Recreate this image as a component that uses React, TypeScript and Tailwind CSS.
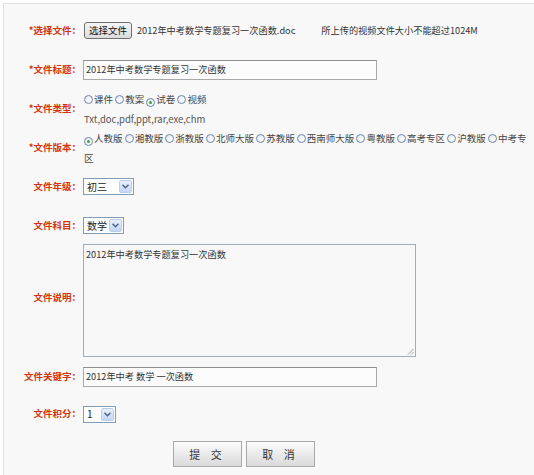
import React from "react";

const font = { fontFamily: '"Noto Sans CJK SC", "Liberation Sans", sans-serif' };

function Label({ text, star }: { text: string; star?: boolean }) {
  return (
    <div className="w-[77px] shrink-0 text-right text-[9.5px] font-bold leading-none text-[#d2340c]">
      {star && "*"}
      {text}：
    </div>
  );
}

function Radio({ checked }: { checked?: boolean }) {
  return (
    <span className="mr-[1px] inline-flex h-[9px] w-[9px] items-center justify-center rounded-full border border-[#6d84a6] bg-gradient-to-br from-[#e3e8ef] to-white align-[-1px]">
      {checked && <span className="h-[3px] w-[3px] rounded-full bg-[#35a635]" />}
    </span>
  );
}

function Choice({ label, checked }: { label: string; checked?: boolean }) {
  return (
    <>
      <Radio checked={checked} />
      {label}{" "}
    </>
  );
}

function Select({ value, className }: { value: string; className: string }) {
  return (
    <div className={"flex h-[17px] items-center border border-[#7f9db9] bg-white " + className}>
      <span className="flex-1 pl-[3px] text-[10px] leading-none text-[#222]">{value}</span>
      <span className="mr-[1px] flex h-[13px] w-[13px] items-center justify-center rounded-[2px] border border-[#bccde9] bg-gradient-to-b from-[#e9f0fd] to-[#c3d5f6]">
        <svg width="7" height="5" viewBox="0 0 7 5">
          <path d="M0.5 0.8 L3.5 3.8 L6.5 0.8" fill="none" stroke="#4d6185" strokeWidth="1.4" />
        </svg>
      </span>
    </div>
  );
}

function TextBox({ value }: { value: string }) {
  return (
    <div className="flex h-[20px] w-[294px] items-center border border-[#a8a8a8] border-t-[#8e8e8e] bg-[#fcfcfc] pl-[2px] text-[9.2px] text-[#333]">
      {value}
    </div>
  );
}

export default function App() {
  return (
    <div className="h-[475px] w-[534px] bg-white text-[9.2px] text-[#444]" style={font}>
      <div className="ml-[3px] mt-[3px] h-[472px] border-l border-t border-[#e2e2e2] bg-[#f8f8f8] pt-[7px]">
        <div className="flex h-[39px] items-center">
          <Label text="选择文件" star />
          <div className="ml-[3px] flex items-center">
            <span className="flex h-[17px] w-[48px] items-center justify-center rounded-[3px] border border-[#707070] bg-gradient-to-b from-[#f6f6f6] to-[#dcdcdc] text-[9.5px] text-[#111]">
              选择文件
            </span>
            <span className="ml-[5px] text-[#333]">2012年中考数学专题复习一次函数.doc</span>
            <span className="ml-[26px] text-[#333]">所上传的视频文件大小不能超过1024M</span>
          </div>
        </div>

        <div className="flex h-[39px] items-center">
          <Label text="文件标题" star />
          <div className="ml-[2px]">
            <TextBox value="2012年中考数学专题复习一次函数" />
          </div>
        </div>

        <div className="flex h-[39px] items-center">
          <Label text="文件类型" star />
          <div className="ml-[3px] text-[9.5px] leading-[20px]">
            <div>
              <Choice label="课件" />
              <Choice label="教案" />
              <Choice label="试卷" checked />
              <Choice label="视频" />
            </div>
            <div className="text-[#555]">Txt,doc,pdf,ppt,rar,exe,chm</div>
          </div>
        </div>

        <div className="flex h-[39px] items-center">
          <Label text="文件版本" star />
          <div className="ml-[3px] w-[447px] text-[9.5px] leading-[20px]">
            <Choice label="人教版" checked />
            <Choice label="湘教版" />
            <Choice label="浙教版" />
            <Choice label="北师大版" />
            <Choice label="苏教版" />
            <Choice label="西南师大版" />
            <Choice label="粤教版" />
            <Choice label="高考专区" />
            <Choice label="沪教版" />
            <Choice label="中考专区" />
          </div>
        </div>

        <div className="flex h-[39px] items-center">
          <Label text="文件年级" />
          <div className="ml-[2px]">
            <Select value="初三" className="w-[51px]" />
          </div>
        </div>

        <div className="flex h-[39px] items-center">
          <Label text="文件科目" />
          <div className="ml-[2px]">
            <Select value="数学" className="w-[41px]" />
          </div>
        </div>

        <div className="flex h-[121px] items-start">
          <div className="mb-[15px] self-center">
            <Label text="文件说明" />
          </div>
          <div className="relative ml-[2px] mt-[-1px] h-[113px] w-[333px] border border-[#a3adb9] bg-[#f8f8f8] px-[2px] pt-[5px] text-[9.2px] leading-none text-[#333]">
            2012年中考数学专题复习一次函数
            <svg className="absolute bottom-[1px] right-[1px]" width="7" height="7" viewBox="0 0 7 7">
              <path d="M6.5 1 L1 6.5 M6.5 4 L4 6.5" stroke="#9a9a9a" strokeWidth="1" />
            </svg>
          </div>
        </div>

        <div className="flex h-[21px] items-center">
          <Label text="文件关键字" />
          <div className="ml-[2px]">
            <TextBox value="2012年中考 数学 一次函数" />
          </div>
        </div>

        <div className="flex h-[54px] items-center">
          <Label text="文件积分" />
          <div className="ml-[2px]">
            <Select value="1" className="w-[33px]" />
          </div>
        </div>

        <div className="flex gap-[4px] pl-[169px]">
          <button className="h-[26px] w-[69px] border border-[#a9a9a9] bg-gradient-to-b from-[#fbfbfb] to-[#dadada] text-[11px] tracking-[4px] text-[#333]">
            提 交
          </button>
          <button className="h-[26px] w-[69px] border border-[#a9a9a9] bg-gradient-to-b from-[#fbfbfb] to-[#dadada] text-[11px] tracking-[4px] text-[#333]">
            取 消
          </button>
        </div>
      </div>
    </div>
  );
}
